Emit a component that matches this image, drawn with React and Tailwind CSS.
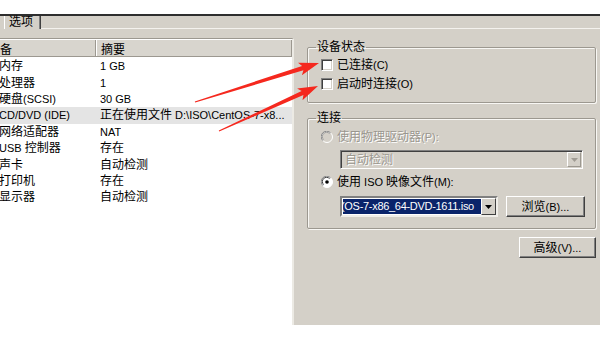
// VMware 虚拟机设置 — CD/DVD 设备页（截图复刻）

const rows = [
  ["内存", "1 GB"],
  ["处理器", "1"],
  ["硬盘(SCSI)", "30 GB"],
  ["CD/DVD (IDE)", "正在使用文件 D:\\ISO\\CentOS-7-x8..."],
  ["网络适配器", "NAT"],
  ["USB 控制器", "存在"],
  ["声卡", "自动检测"],
  ["打印机", "存在"],
  ["显示器", "自动检测"],
];

// 红色标注箭头：由尾到尖算出多边形顶点
function arrowPoints(x1, y1, x2, y2) {
  const dx = x2 - x1;
  const dy = y2 - y1;
  const len = Math.hypot(dx, dy);
  const ux = dx / len;
  const uy = dy / len;
  const nx = -uy;
  const ny = ux;
  const head = 17;
  const hw = 6.5;
  const sw = 2.2;
  const tw = 0.6;
  const bx = x2 - ux * head;
  const by = y2 - uy * head;
  const back = 3;
  const pts = [
    [x1 + nx * tw, y1 + ny * tw],
    [bx + nx * sw, by + ny * sw],
    [bx - ux * back + nx * hw, by - uy * back + ny * hw],
    [x2, y2],
    [bx - ux * back - nx * hw, by - uy * back - ny * hw],
    [bx - nx * sw, by - ny * sw],
    [x1 - nx * tw, y1 - ny * tw],
  ];
  return pts.map((p) => p[0].toFixed(1) + "," + p[1].toFixed(1)).join(" ");
}

// 西文字符用小一号（原图为 Tahoma 11px + 宋体 12px）
function Mixed({ text }) {
  const parts = text.split(/([\u0000-\u02ff]+)/).filter(Boolean);
  return parts.map((p, i) =>
    /^[\u0000-\u02ff]+$/.test(p) ? (
      <span key={i} className="text-[11px]">
        {p}
      </span>
    ) : (
      <span key={i}>{p}</span>
    )
  );
}

function Checkbox() {
  return (
    <span className="w-[12px] h-[12px] bg-white border border-t-[#808080] border-l-[#808080] border-b-white border-r-white shadow-[inset_1px_1px_0_#404040,inset_-1px_-1px_0_#d4d0c8] shrink-0" />
  );
}

function Radio({ checked, disabled }) {
  return (
    <svg width="12" height="12" viewBox="0 0 12 12" className="shrink-0">
      <circle cx="6" cy="6" r="5.5" fill={disabled ? "#d4d0c8" : "#ffffff"} stroke="#ffffff" />
      <path d="M1.8 9.6 A5 5 0 0 1 9.6 1.8" fill="none" stroke="#808080" strokeWidth="1" />
      <path d="M2.6 8.6 A4 4 0 0 1 8.6 2.6" fill="none" stroke={disabled ? "#a0a0a0" : "#404040"} strokeWidth="1" />
      {checked && <circle cx="6" cy="6" r="1.8" fill="#000000" />}
    </svg>
  );
}

function Button({ children, className = "" }) {
  return (
    <div
      className={`h-[21px] flex items-center justify-center bg-[#d4d0c8] border border-t-white border-l-white border-r-[#404040] border-b-[#404040] shadow-[inset_-1px_-1px_0_#808080] ${className}`}
    >
      {children}
    </div>
  );
}

function DownArrow({ color = "#000000" }) {
  return (
    <svg width="7" height="4" viewBox="0 0 7 4">
      <path d="M0 0 H7 L3.5 4 Z" fill={color} />
    </svg>
  );
}

export default function App() {
  return (
    <div className="w-[600px] h-[340px] bg-white relative overflow-hidden text-[12px] leading-[14px] text-black font-['Liberation_Sans','Noto_Sans_CJK_SC',sans-serif]">
      <div className="h-[14px]" />
      <div className="h-[2px] bg-[#2e2e2e]" />

      <div className="h-[309px] bg-[#d4d0c8] flex flex-col">
        {/* 选项卡条 */}
        <div className="h-[13px] flex">
          <div className="w-[4px]" />
          <div className="w-[37px] h-[13px] border-l border-l-white border-r border-r-[#404040] shadow-[inset_-1px_0_0_#808080] pl-[4px] leading-[12px]">
            选项
          </div>
          <div className="flex-1 border-b border-b-[#f4f2ee]" />
        </div>

        <div className="flex flex-1">
          {/* 左侧设备列表 */}
          <div className="mt-[9px] w-[294px] bg-white border-t border-t-[#9c9890] border-r-2 border-r-[#eceae4] overflow-hidden">
            <div className="h-[18px] flex bg-[#d8d5ce] border-t border-t-white border-b border-b-[#9c9890]">
              <div className="w-[96px] pt-[4px] leading-[12px] border-r border-r-[#9c9890] shadow-[1px_0_0_white] overflow-hidden whitespace-nowrap">
                <span className="ml-[-12px]">设备</span>
              </div>
              <div className="w-[196px] pt-[4px] leading-[12px] pl-[5px] border-r border-r-[#9c9890]">摘要</div>
            </div>
            <div className="h-[1px]" />
            {rows.map(([name, value], i) => (
              <div
                key={name}
                className={`h-[16.4px] flex items-center whitespace-nowrap ${i === 3 ? "bg-[#e4e4e4]" : ""}`}
              >
                <div className="w-[101px] shrink-0 ml-[-1px] overflow-hidden">
                  <Mixed text={name} />
                </div>
                <div className="overflow-hidden">
                  <Mixed text={value} />
                </div>
              </div>
            ))}
          </div>

          {/* 右侧设置面板 */}
          <div className="flex-1 pt-[11px] flex flex-col">
            <fieldset className="ml-[13px] w-[289px] border border-[#9c9890] rounded-[2px] shadow-[inset_1px_1px_0_#f8f7f4,1px_1px_0_#f8f7f4] pl-[13px] pb-[11px]">
              <legend className="ml-[-5px] px-[1px] leading-[14px]">设备状态</legend>
              <div className="mt-[4px] flex items-center gap-[4px] h-[14px]">
                <Checkbox />
                <span>
                  <Mixed text="已连接(C)" />
                </span>
              </div>
              <div className="mt-[5px] flex items-center gap-[4px] h-[14px]">
                <Checkbox />
                <span>
                  <Mixed text="启动时连接(O)" />
                </span>
              </div>
            </fieldset>

            <fieldset className="mt-[8px] ml-[13px] w-[289px] border border-[#9c9890] rounded-[2px] shadow-[inset_1px_1px_0_#f8f7f4,1px_1px_0_#f8f7f4] pl-[13px] pb-[11px]">
              <legend className="ml-[-5px] px-[1px] leading-[14px]">连接</legend>
              <div className="mt-[5px] flex items-center gap-[4px] h-[14px] text-[#9a978f] [text-shadow:1px_1px_0_#ffffff]">
                <Radio disabled />
                <span>
                  <Mixed text="使用物理驱动器(P):" />
                </span>
              </div>
              <div className="mt-[6px] ml-[19px] w-[243px] h-[19px] flex items-center border border-t-[#808080] border-l-[#808080] border-b-white border-r-white shadow-[inset_1px_1px_0_#404040] bg-[#d4d0c8]">
                <span className="flex-1 pl-[4px] text-[#9a978f] [text-shadow:1px_1px_0_#ffffff]">自动检测</span>
                <div className="w-[14px] h-[15px] mr-[1px] flex items-center justify-center border border-t-white border-l-white border-r-[#9c9890] border-b-[#9c9890]">
                  <DownArrow color="#a09c94" />
                </div>
              </div>
              <div className="mt-[6px] flex items-center gap-[4px] h-[14px]">
                <Radio checked />
                <span>
                  <Mixed text="使用 ISO 映像文件(M):" />
                </span>
              </div>
              <div className="mt-[7px] ml-[19px] flex items-center">
                <div className="w-[158px] h-[21px] flex items-center border-2 border-t-[#808080] border-l-[#808080] border-b-[#f0eee9] border-r-[#f0eee9] bg-white">
                  <div className="ml-[1px] w-[139px] h-[15px] bg-[#0a246a] text-white text-[11px] tracking-[-0.3px] overflow-hidden whitespace-nowrap leading-[15px]">
                    <span className="ml-[-2px]">(OS-7-x86_64-DVD-1611.iso</span>
                  </div>
                  <div className="ml-auto w-[15px] h-[17px] flex items-center justify-center bg-[#d4d0c8] border border-t-white border-l-white border-r-[#404040] border-b-[#404040]">
                    <DownArrow />
                  </div>
                </div>
                <Button className="ml-[8px] w-[79px]">
                  <Mixed text="浏览(B)..." />
                </Button>
              </div>
            </fieldset>

            <div className="mt-[8px] flex justify-end pr-[4px]">
              <Button className="w-[77px]">
                <Mixed text="高级(V)..." />
              </Button>
            </div>
          </div>
        </div>
      </div>

      {/* 红色标注箭头 */}
      <svg className="absolute left-0 top-0 pointer-events-none" width="600" height="340">
        <polygon points={arrowPoints(195, 102, 319, 63)} fill="#f5281e" />
        <polygon points={arrowPoints(219, 131, 318, 86)} fill="#f5281e" />
      </svg>
    </div>
  );
}
